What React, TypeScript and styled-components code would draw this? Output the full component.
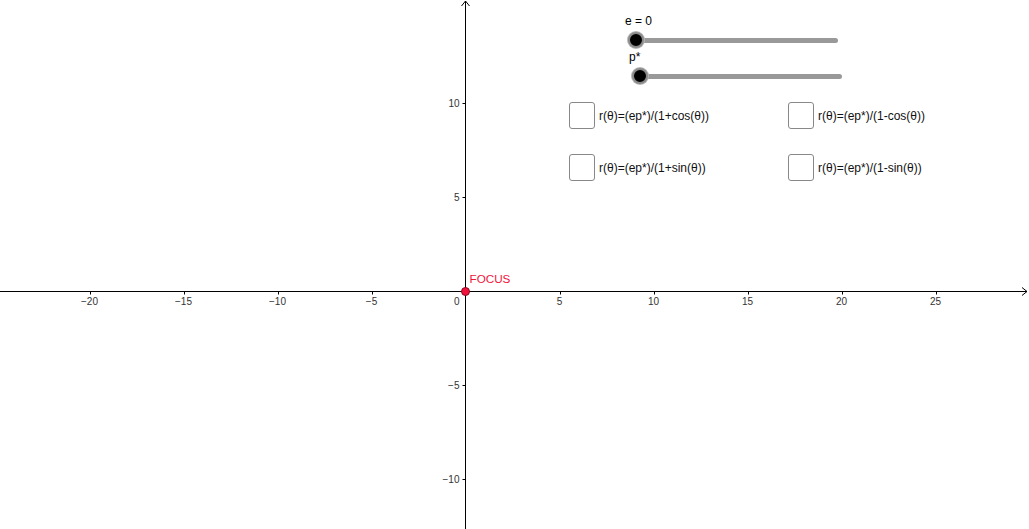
import React from "react";
import styled, { createGlobalStyle } from "styled-components";

const GlobalStyle = createGlobalStyle`
    html, body {
        margin: 0;
        padding: 0;
        background: #ffffff;
    }
    body {
        font-family: "Liberation Sans", Arial, sans-serif;
    }
`;

const ORIGIN_X = 465.5;
const ORIGIN_Y = 291.5;
const UNIT = 18.8;
const WIDTH = 1029;
const HEIGHT = 529;

const Applet = styled.div`
    position: relative;
    width: ${WIDTH}px;
    height: ${HEIGHT}px;
    overflow: hidden;
    background: #ffffff;
`;

const Canvas = styled.svg`
    display: block;
    width: ${WIDTH}px;
    height: ${HEIGHT}px;
`;

// floating controls of the applet, laid over the graphics view
const ControlPanel = styled.div`
    position: absolute;
    left: 569px;
    top: 14px;
    display: flex;
    flex-direction: column;
`;

const SliderStack = styled.div`
    display: flex;
    flex-direction: column;
    padding-left: 56px;
`;

const Slider = styled.div<{ $indent: number }>`
    display: flex;
    flex-direction: column;
    align-items: flex-start;
    height: 36px;
    margin-left: ${(p) => p.$indent}px;
`;

const SliderLabel = styled.div`
    font-size: 12px;
    color: #000;
    line-height: 14px;
`;

const Track = styled.div`
    position: relative;
    margin: 10px 0 0 11px;
    width: 202px;
    height: 5px;
    border-radius: 3px;
    background: #999999;
`;

const Knob = styled.div`
    position: absolute;
    left: -8px;
    top: -6px;
    width: 12px;
    height: 12px;
    border-radius: 50%;
    background: #000;
    border: 2px solid #8a8a8a;
    box-shadow: 0 0 0 1px #b5b5b5;
`;

const CheckGrid = styled.div`
    display: grid;
    grid-template-columns: 219px 219px;
    row-gap: 25px;
    margin-top: 16px;
`;

const CheckRow = styled.label`
    display: flex;
    align-items: center;
    gap: 4px;
    font-size: 12px;
    color: #111;
    cursor: pointer;
`;

const Box = styled.span`
    display: block;
    width: 24px;
    height: 25px;
    border: 1px solid #888;
    border-radius: 3px;
    background: #fff;
`;

const xTicks = [-20, -15, -10, -5, 5, 10, 15, 20, 25];
const yTicks = [10, 5, -5, -10];
const fmt = (n: number) => (n < 0 ? "\u2212" + Math.abs(n) : String(n));

const Axes = () => (
    <Canvas viewBox={`0 0 ${WIDTH} ${HEIGHT}`}>
        <g stroke="#000" strokeWidth={1} fill="none">
            <line x1={0} y1={ORIGIN_Y} x2={WIDTH - 2} y2={ORIGIN_Y} />
            <polyline points={`${WIDTH - 7},${ORIGIN_Y - 4} ${WIDTH - 2},${ORIGIN_Y} ${WIDTH - 7},${ORIGIN_Y + 4}`} />
            <line x1={ORIGIN_X} y1={1} x2={ORIGIN_X} y2={HEIGHT} />
            <polyline points={`${ORIGIN_X - 4},6 ${ORIGIN_X},1 ${ORIGIN_X + 4},6`} />
            {xTicks.map((t) => {
                const x = Math.round(ORIGIN_X + t * UNIT) + 0.5;
                return <line key={"xt" + t} x1={x} y1={ORIGIN_Y} x2={x} y2={ORIGIN_Y + 3} />;
            })}
            {yTicks.map((t) => {
                const y = Math.round(ORIGIN_Y - t * UNIT) - 0.5;
                return <line key={"yt" + t} x1={ORIGIN_X - 3} y1={y} x2={ORIGIN_X} y2={y} />;
            })}
        </g>
        <g fill="#333" fontSize={10} fontFamily="Liberation Sans, Arial, sans-serif">
            {xTicks.map((t) => (
                <text key={"xl" + t} x={ORIGIN_X + t * UNIT} y={ORIGIN_Y + 13} textAnchor="middle">
                    {fmt(t)}
                </text>
            ))}
            {yTicks.map((t) => (
                <text key={"yl" + t} x={ORIGIN_X - 6} y={ORIGIN_Y - t * UNIT + 3} textAnchor="end">
                    {fmt(t)}
                </text>
            ))}
            <text x={ORIGIN_X - 6} y={ORIGIN_Y + 13} textAnchor="end">0</text>
        </g>
        <circle cx={ORIGIN_X} cy={ORIGIN_Y} r={4} fill="#f0143c" stroke="#8a0a20" strokeWidth={1} />
        <text x={ORIGIN_X + 4} y={ORIGIN_Y - 9} fill="#f0143c" fontSize={11.7} fontFamily="Liberation Sans, Arial, sans-serif">
            FOCUS
        </text>
    </Canvas>
);

const sliders = [
    { label: "e = 0", indent: 0 },
    { label: "p*", indent: 4 },
];

const checks = [
    "r(\u03b8)=(ep*)/(1+cos(\u03b8))",
    "r(\u03b8)=(ep*)/(1-cos(\u03b8))",
    "r(\u03b8)=(ep*)/(1+sin(\u03b8))",
    "r(\u03b8)=(ep*)/(1-sin(\u03b8))",
];

const App = () => (
    <>
        <GlobalStyle />
        <Applet>
            <Axes />
            <ControlPanel>
                <SliderStack>
                    {sliders.map((s) => (
                        <Slider key={s.label} $indent={s.indent}>
                            <SliderLabel>{s.label}</SliderLabel>
                            <Track>
                                <Knob />
                            </Track>
                        </Slider>
                    ))}
                </SliderStack>
                <CheckGrid>
                    {checks.map((c) => (
                        <CheckRow key={c}>
                            <Box />
                            <span>{c}</span>
                        </CheckRow>
                    ))}
                </CheckGrid>
            </ControlPanel>
        </Applet>
    </>
);

export default App;
